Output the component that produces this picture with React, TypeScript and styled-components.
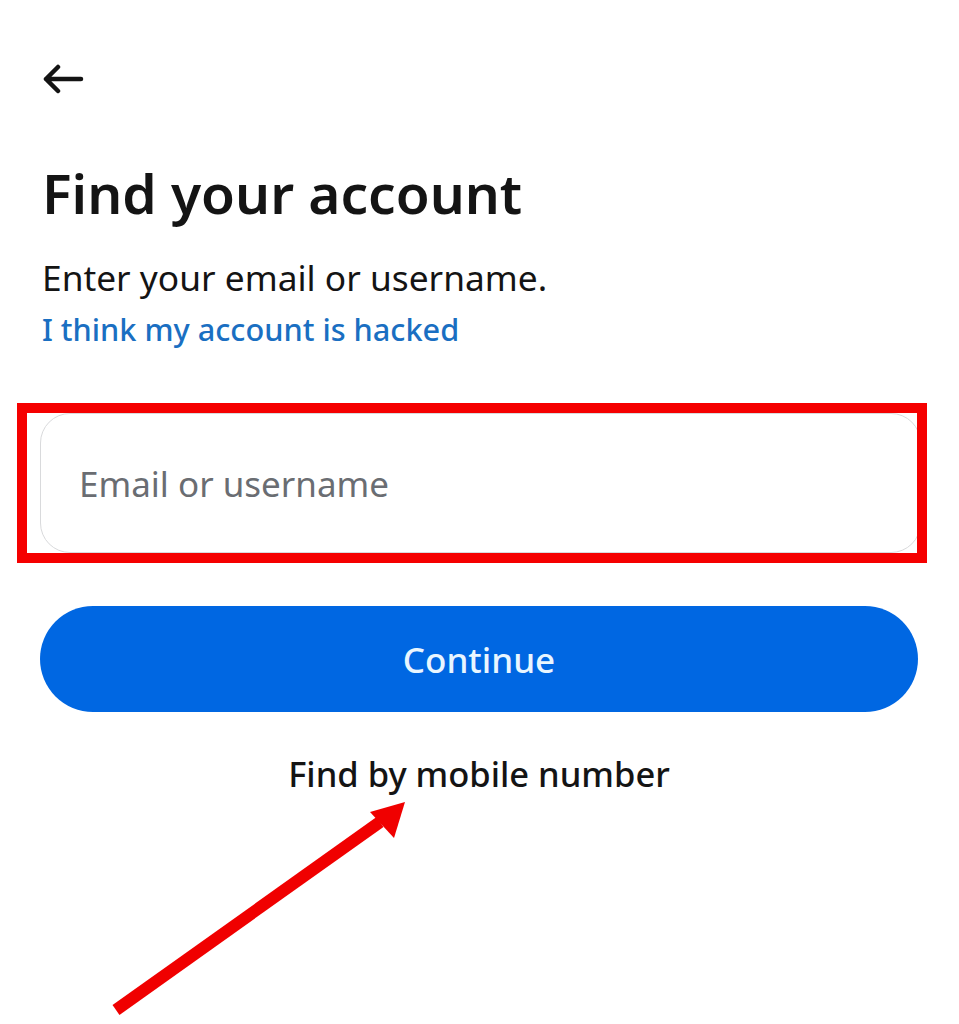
import React from "react";
import styled, { createGlobalStyle } from "styled-components";

const Global = createGlobalStyle`
  html, body { margin: 0; padding: 0; background: #ffffff; }
  body { font-family: "Noto Sans", Roboto, "Liberation Sans", sans-serif; color: #1c1e21; }
  * { box-sizing: border-box; }
`;

const Page = styled.div`
  position: relative;
  width: 959px;
  height: 1024px;
  overflow: hidden;
  padding: 64px 41px 0 40px;
  display: flex;
  flex-direction: column;
`;

const BackButton = styled.button`
  width: 44px;
  height: 30px;
  padding: 0;
  margin: 0 0 0 2px;
  border: none;
  background: transparent;
  display: flex;
  align-items: center;
  cursor: pointer;
`;

const Title = styled.h1`
  margin: 65px 0 0 2px;
  font-size: 55px;
  line-height: 68px;
  font-weight: 600;
  color: #141414;
`;

const Subtitle = styled.p`
  margin: 30px 0 0 2px;
  font-size: 35.3px;
  line-height: 40px;
  font-weight: 400;
  color: #141414;
`;

const HelpLink = styled.a`
  margin: 12px 0 0 2px;
  font-size: 30.7px;
  line-height: 40px;
  font-weight: 500;
  color: #1a6fc2;
  text-decoration: none;
`;

const Highlight = styled.div`
  margin: 54px -9px 0 -23px;
  border: 10px solid #f50000;
  padding-left: 13px;
  overflow: hidden;
`;

const Field = styled.input`
  display: block;
  width: calc(100% + 4px);
  height: 140px;
  margin: 0;
  padding: 0 0 0 38px;
  border: 1.5px solid #d9dadc;
  border-radius: 30px;
  background: #ffffff;
  font-family: "Noto Sans", Roboto, sans-serif;
  font-size: 35px;
  color: #1c1e21;
  outline: none;
  &::placeholder { color: #6a6d72; }
`;

const PrimaryButton = styled.button`
  margin-top: 43px;
  width: 100%;
  height: 106px;
  border: none;
  border-radius: 53px;
  background: #0067e2;
  color: #e9f6ff;
  font-family: "Noto Sans", Roboto, sans-serif;
  font-size: 35px;
  font-weight: 500;
  cursor: pointer;
`;

const TextButton = styled.button`
  margin-top: 42px;
  align-self: center;
  border: none;
  background: transparent;
  padding: 0;
  font-family: "Noto Sans", Roboto, sans-serif;
  font-size: 34.5px;
  line-height: 40px;
  font-weight: 500;
  color: #141414;
  cursor: pointer;
`;

const Annotation = styled.svg`
  position: absolute;
  left: 100px;
  top: 790px;
  pointer-events: none;
`;

export default function App() {
  return (
    <>
      <Global />
      <Page>
        <BackButton aria-label="Back">
          <svg width="42" height="30" viewBox="0 0 42 30" fill="none">
            <path
              d="M39 15H4M16 3L4 15L16 27"
              stroke="#141414"
              strokeWidth="4.5"
              strokeLinecap="round"
              strokeLinejoin="round"
            />
          </svg>
        </BackButton>
        <Title>Find your account</Title>
        <Subtitle>Enter your email or username.</Subtitle>
        <HelpLink href="#">I think my account is hacked</HelpLink>
        <Highlight>
          <Field placeholder="Email or username" />
        </Highlight>
        <PrimaryButton>Continue</PrimaryButton>
        <TextButton>Find by mobile number</TextButton>
        <Annotation width="320" height="234" viewBox="0 0 320 234">
          <line x1="16" y1="220" x2="280" y2="32" stroke="#f00000" strokeWidth="12" />
          <polygon points="305,12 270,22 294,48" fill="#f00000" />
        </Annotation>
      </Page>
    </>
  );
}
